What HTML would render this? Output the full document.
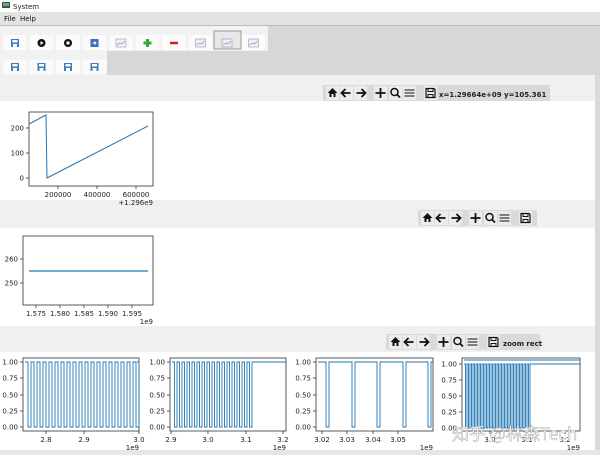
<!DOCTYPE html><html><head><meta charset="utf-8"><style>
html,body{margin:0;padding:0;width:600px;height:455px;overflow:hidden;background:#fff}
svg{display:block;font-family:"DejaVu Sans","Liberation Sans",sans-serif}
</style></head><body>
<svg id="s" width="600" height="455" viewBox="0 0 600 455" xmlns="http://www.w3.org/2000/svg">
<rect width="600" height="455" fill="#fff"/>
<!-- title -->
<rect x="2" y="2" width="8" height="6" fill="#3a5a3a"/><rect x="3" y="3" width="6" height="3" fill="#6a8"/>
<text x="13" y="9" font-size="7" fill="#222">System</text>
<rect x="0" y="12" width="600" height="13" fill="#e3e3e3"/>
<line x1="0" y1="25.5" x2="600" y2="25.5" stroke="#bbb"/>
<text x="4" y="21" font-size="7" fill="#111">File</text><text x="20" y="21" font-size="7" fill="#111">Help</text>
<rect x="0" y="26" width="600" height="49" fill="#d7d7d7"/>
<rect x="0" y="26" width="268" height="25" fill="#f2f2f2"/>
<rect x="0" y="51" width="107" height="24" fill="#f2f2f2"/>
<g id="tb"></g>
<!-- panels -->
<rect x="0" y="75" width="595" height="26" fill="#f0f0f0"/>
<rect x="0" y="200" width="595" height="28" fill="#f0f0f0"/>
<rect x="0" y="326" width="595" height="26" fill="#f0f0f0"/>
<rect x="595" y="75" width="5" height="380" fill="#dadada"/>
<rect x="0" y="450" width="600" height="5" fill="#e6e6e6"/>
<rect x="323" y="85" width="227" height="16" fill="#d9d9d9"/>
<rect x="418" y="210" width="119" height="16" fill="#d9d9d9"/>
<rect x="386" y="334" width="154" height="16" fill="#d9d9d9"/>
<text x="439" y="97" font-size="7" font-weight="bold" fill="#222">x=1.29664e+09  y=105.361</text>
<text x="503" y="346" font-size="7" font-weight="bold" fill="#222">zoom rect</text>
<g id="nav"></g>
<g id="plots" font-size="7" fill="#222"></g>
<text x="452" y="440" font-size="17" fill="#fff" stroke="#aaa" stroke-width="0.5" font-family="Noto Sans CJK SC, sans-serif">知乎 @林森Tech</text>
</svg>
<script>
var NS="http://www.w3.org/2000/svg";
function add(p,tag,a,txt){var e=document.createElementNS(NS,tag);for(var k in a)e.setAttribute(k,a[k]);if(txt!=null)e.textContent=txt;document.getElementById(p).appendChild(e);return e;}
// top toolbar buttons
var row1=[["save","#3a7fc1"],["play","#111"],["stop","#111"],["imp","#3a6fc0"],["chart"],["plus","#3a3"],["minus","#c22"],["chart"],["chartp"],["chart"]];
row1.forEach(function(b,i){var x=3+i*26.5,y=35;
 if(b[0]=="chartp"){add("tb","rect",{x:x-1,y:y-4,width:27,height:18,fill:"#e8e8e8",stroke:"#999"});}
 else add("tb","rect",{x:x,y:y,width:24,height:15,fill:"#fbfbfb",rx:1});
 var cx=x+12,cy=y+8;
 if(b[0]=="save"){add("tb","rect",{x:cx-4,y:cy-4,width:8,height:8,fill:b[1]});add("tb","rect",{x:cx-2.5,y:cy-3,width:5,height:2.5,fill:"#fff"});add("tb","rect",{x:cx-2,y:cy+1,width:4,height:3,fill:"#fff"});}
 if(b[0]=="play"){add("tb","circle",{cx:cx,cy:cy,r:4,fill:"#111"});add("tb","path",{d:"M"+(cx-1)+" "+(cy-2)+"l3 2l-3 2z",fill:"#fff"});}
 if(b[0]=="stop"){add("tb","circle",{cx:cx,cy:cy,r:4,fill:"#111"});add("tb","rect",{x:cx-1.5,y:cy-1.5,width:3,height:3,fill:"#fff"});}
 if(b[0]=="imp"){add("tb","rect",{x:cx-4,y:cy-4,width:8,height:8,fill:b[1]});add("tb","path",{d:"M"+(cx-2)+" "+cy+"h3m-1-1.5l1.5 1.5l-1.5 1.5",stroke:"#fff",fill:"none"});}
 if(b[0]=="chart"||b[0]=="chartp"){add("tb","rect",{x:cx-5,y:cy-4,width:10,height:8,fill:"#eef",stroke:"#999","stroke-width":0.6});add("tb","path",{d:"M"+(cx-4)+" "+(cy+2)+"l3-2l2 1l3-3",stroke:"#888",fill:"none","stroke-width":0.6});}
 if(b[0]=="plus"){add("tb","path",{d:"M"+(cx-4)+" "+cy+"h8M"+cx+" "+(cy-4)+"v8",stroke:b[1],"stroke-width":3});}
 if(b[0]=="minus"){add("tb","path",{d:"M"+(cx-4)+" "+cy+"h8",stroke:b[1],"stroke-width":2.5});}
});
for(var i=0;i<4;i++){var x=3+i*26.5,y=60;add("tb","rect",{x:x,y:y,width:24,height:14,fill:"#fbfbfb",rx:1});var cx=x+12,cy=y+7;
 add("tb","rect",{x:cx-4,y:cy-4,width:8,height:8,fill:"#3a7fc1"});add("tb","rect",{x:cx-2.5,y:cy-3,width:5,height:2.5,fill:"#fff"});add("tb","rect",{x:cx-2,y:cy+1,width:4,height:3,fill:"#fff"});}
// nav toolbars
function nav(x0,y){var xs=[x0+3,x0+17,x0+31,x0+51,x0+66,x0+80,x0+101];
 xs.forEach(function(x,i){add("nav","rect",{x:x,y:y,width:13,height:14,fill:"#ececec"});var cx=x+6.5,cy=y+7;
 var d,st={fill:"none",stroke:"#111","stroke-width":1.8};
 if(i==0){add("nav","path",{d:"M"+(cx-5)+" "+(cy)+"l5-5l5 5h-2v4h-2v-3h-2v3h-2v-4z",fill:"#111"});return;}
 if(i==1)d="M"+(cx+4)+" "+cy+"h-8m3-4l-4 4l4 4";
 if(i==2)d="M"+(cx-4)+" "+cy+"h8m-3-4l4 4l-4 4";
 if(i==3)d="M"+(cx-5)+" "+cy+"h10M"+cx+" "+(cy-5)+"v10";
 if(i==4){add("nav","circle",{cx:cx-1,cy:cy-1,r:3.5,fill:"none",stroke:"#111","stroke-width":1.5});d="M"+(cx+1.5)+" "+(cy+1.5)+"l3 3";}
 if(i==5){d="M"+(cx-5)+" "+(cy-3)+"h10M"+(cx-5)+" "+cy+"h10M"+(cx-5)+" "+(cy+3)+"h10";st["stroke-width"]=1;}
 if(i==6){add("nav","path",{d:"M"+(cx-4.5)+" "+(cy-4.5)+"h8l1 1v8h-9z",fill:"none",stroke:"#111","stroke-width":1.2});d="M"+(cx-2.5)+" "+(cy-4.5)+"v3h5v-3M"+(cx-2.5)+" "+(cy+4.5)+"v-3h5v3";st["stroke-width"]=1;}
 st.d=d;add("nav","path",st);});}
nav(323,86);nav(418,211);nav(386,335);
// plots
var C="#1f77b4";
function axes(x0,x1,y0,y1,yt,xt,off){add("plots","rect",{x:x0,y:y0,width:x1-x0,height:y1-y0,fill:"none",stroke:"#333","stroke-width":0.8});
 yt.forEach(function(t){add("plots","line",{x1:x0-3,x2:x0,y1:t[0],y2:t[0],stroke:"#333","stroke-width":0.8});add("plots","text",{x:x0-5,y:t[0]+2.5,"text-anchor":"end"},t[1]);});
 xt.forEach(function(t){add("plots","line",{x1:t[0],x2:t[0],y1:y1,y2:y1+3,stroke:"#333","stroke-width":0.8});add("plots","text",{x:t[0],y:y1+11,"text-anchor":"middle"},t[1]);});
 if(off)add("plots","text",{x:x1,y:y1+19,"text-anchor":"end"},off);}
axes(29,153,112,186,[[128,"200"],[153,"100"],[178,"0"]],[[58,"200000"],[97,"400000"],[136,"600000"]],"+1.296e9");
add("plots","path",{d:"M29 124L46 115L47 178L148 126",fill:"none",stroke:C,"stroke-width":1});
axes(23,153,236,305,[[259,"260"],[283,"250"]],[[36,"1.575"],[60,"1.580"],[84,"1.585"],[108,"1.590"],[132,"1.595"]],"1e9");
add("plots","path",{d:"M29 271H148",stroke:C,"stroke-width":1.2});
var Y=[[362,"1.00"],[378,"0.75"],[395,"0.50"],[411,"0.25"],[427,"0.00"]];
function sq(x0,x1,xend,per,duty,hi,lo){var d="M"+x0+" "+hi,x=x0;while(x<x1){var xl=x+per*duty;d+="H"+xl+"V"+lo+"H"+(x+per)+"V"+hi;x+=per;}d+="H"+xend;add("plots","path",{d:d,fill:"none",stroke:C,"stroke-width":0.9});}
axes(23,139,358,431,Y,[[46,"2.8"],[84,"2.9"],[139,"3.0"]],"1e9");sq(25,137,137,6,0.5,362,427);
axes(170,286,358,431,Y,[[171,"2.9"],[208,"3.0"],[246,"3.1"],[283,"3.2"]],"1e9");sq(172,250,286,5,0.5,362,427);
axes(316,433,358,431,Y,[[322,"3.02"],[347,"3.03"],[373,"3.04"],[398,"3.05"]],"1e9");
add("plots","path",{d:"M318 362H326V427H329V362H352V427H355V362H377V427H380V362H403V427H406V362H428V427H431V362H433",fill:"none",stroke:C,"stroke-width":0.9});
axes(462,580,358,431,[[364,"1.00"],[380,"0.75"],[396,"0.50"],[412,"0.25"],[428,"0.00"]],[[490,"3.0"],[527,"3.1"],[565,"3.2"]],"1e9");
sq(464,530,580,3,0.5,364,428);add("plots","path",{d:"M464 360H580",stroke:C,"stroke-width":0.9});
</script>
</body></html>
